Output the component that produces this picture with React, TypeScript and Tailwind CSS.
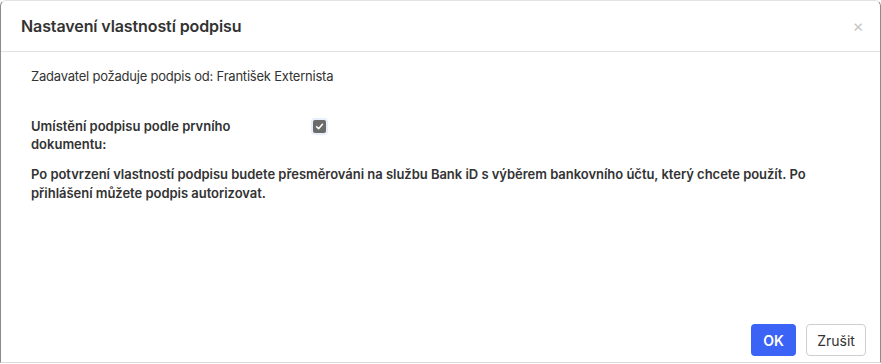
import React from 'react';

export default function App() {
  return (
    <div className="w-[881px] h-[364px] bg-white overflow-hidden font-['Inter',sans-serif] text-[#333]">
      <div className="h-[363px] flex flex-col rounded-t-[6px] border border-t-[#e3e3e3] border-l-[#8c8c8c] border-r-[#8c8c8c] border-b-[#dcdcdc] bg-white">
        {/* Header */}
        <div className="h-[51px] flex items-center justify-between pl-[20px] pr-[16px] border-b border-[#e2e2e2]">
          <h2 className="text-[16px] font-semibold text-[#333] tracking-[-0.1px]">Nastavení vlastností podpisu</h2>
          <button className="text-[#c6c6c6] text-[17px] leading-none w-[12px]">×</button>
        </div>

        {/* Body */}
        <div className="flex-1 px-[30px] pt-[15px] text-[13px] leading-[19px]">
          <p className="text-[#333] tracking-[-0.22px]">Zadavatel požaduje podpis od: František Externista</p>

          <div className="mt-[31px] flex">
            <div className="w-[282px] font-semibold leading-[18px]">
              <div className="w-[230px]">Umístění podpisu podle prvního dokumentu:</div>
            </div>
            <div className="pt-[3px]">
              <span className="flex items-center justify-center w-[13px] h-[13px] rounded-[2px] bg-[#6b6b6b] shadow-[0_0_0_2px_#e8eefb]">
                <svg width="9" height="9" viewBox="0 0 10 10">
                  <path d="M1.8 5.2 L4 7.4 L8.3 2.6" fill="none" stroke="white" strokeWidth="1.7" strokeLinecap="round" strokeLinejoin="round" />
                </svg>
              </span>
            </div>
          </div>

          <p className="mt-[12px] font-semibold tracking-[-0.03px]">
            Po potvrzení vlastností podpisu budete přesměrováni na službu Bank iD s výběrem bankovního účtu, který chcete použít. Po přihlášení můžete podpis autorizovat.
          </p>
        </div>

        {/* Footer */}
        <div className="flex justify-end gap-[10px] pr-[14px] pb-[6px]">
          <button className="h-[32px] w-[45px] rounded-[4px] bg-[#3b63f6] text-white text-[14px] font-semibold">OK</button>
          <button className="h-[32px] w-[60px] rounded-[4px] border border-[#cfcfcf] bg-white text-[#333] text-[14px]">Zrušit</button>
        </div>
      </div>
    </div>
  );
}
